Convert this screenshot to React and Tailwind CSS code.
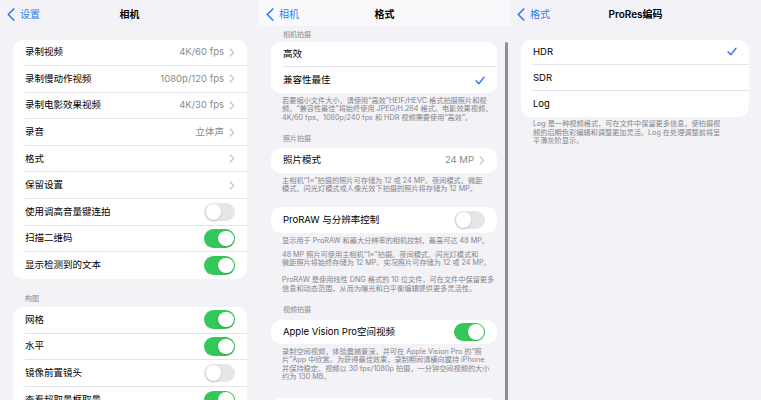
import React from 'react';

const BLUE = 'text-[#2f7cf6]';

const BackChevron = () => (
  <svg width="8" height="13" viewBox="0 0 8 13" className="shrink-0">
    <polyline points="6.8,1 1.3,6.5 6.8,12" fill="none" stroke="#2f7cf6" strokeWidth="1.7" strokeLinecap="round" strokeLinejoin="round" />
  </svg>
);

const Chevron = () => (
  <svg width="6" height="9" viewBox="0 0 6 9" className="ml-[5px] shrink-0">
    <polyline points="1.2,1 4.6,4.5 1.2,8" fill="none" stroke="#c4c4c8" strokeWidth="1.2" strokeLinecap="round" strokeLinejoin="round" />
  </svg>
);

const Check = () => (
  <svg width="10" height="9" viewBox="0 0 10 9" className="shrink-0">
    <polyline points="1,4.8 3.8,7.8 9,1.2" fill="none" stroke="#2f7cf6" strokeWidth="1.4" strokeLinecap="round" strokeLinejoin="round" />
  </svg>
);

const Toggle = ({ on }) => (
  <div className={`w-[31px] h-[18.5px] rounded-full p-[1.5px] flex shrink-0 ${on ? 'bg-[#34c759] justify-end' : 'bg-[#e6e6e9] justify-start'}`}>
    <div className="w-[15.5px] h-[15.5px] rounded-full bg-white shadow-[0_1px_2px_rgba(0,0,0,0.18)]" />
  </div>
);

const Row = ({ label, value, chevron, toggle, check, last, h }) => (
  <div className="pl-3">
    <div className={`flex items-center pr-3 ${h} ${last ? '' : 'border-b border-[#e4e4e7]'}`}>
      <span className="flex-1 text-[9.5px] text-black whitespace-nowrap">{label}</span>
      {value && <span className="text-[9.5px] text-[#8a8a8e] whitespace-nowrap">{value}</span>}
      {chevron && <Chevron />}
      {toggle !== undefined && <Toggle on={toggle} />}
      {check && <Check />}
    </div>
  </div>
);

const Section = ({ children, className }) => (
  <div className={`px-3 text-[7px] leading-[9px] text-[#8a8a8e] ${className}`}>{children}</div>
);

const Footer = ({ lines, className }) => (
  <div className={`px-[11px] text-[7.2px] leading-[8.4px] text-[#85858a] ${className}`}>
    {lines.map((l, i) => (
      <div key={i} className="whitespace-nowrap">{l}</div>
    ))}
  </div>
);

const Nav = ({ back, title, className }) => (
  <div className={`relative flex items-center ${className}`}>
    <div className="absolute left-[7px] flex items-center gap-[5px]">
      <BackChevron />
      <span className={`text-[10px] ${BLUE}`}>{back}</span>
    </div>
    <div className="flex-1 text-center text-[10px] font-semibold text-black">{title}</div>
  </div>
);

const card = 'bg-white rounded-[10px] overflow-hidden';

export default function App() {
  return (
    <div
      className="w-[761px] h-[400px] overflow-hidden bg-[#f2f2f7] flex"
      style={{ fontFamily: 'Inter, "Noto Sans CJK SC", sans-serif' }}
    >
      {/* 相机 */}
      <div className="w-[259px] shrink-0">
        <Nav back="设置" title="相机" className="h-[28px]" />
        <div className={`${card} mt-[11.5px] ml-[13px] mr-[12px]`}>
          <Row h="h-[26.6px]" label="录制视频" value="4K/60 fps" chevron />
          <Row h="h-[26.6px]" label="录制慢动作视频" value="1080p/120 fps" chevron />
          <Row h="h-[26.6px]" label="录制电影效果视频" value="4K/30 fps" chevron />
          <Row h="h-[26.6px]" label="录音" value="立体声" chevron />
          <Row h="h-[26.6px]" label="格式" chevron />
          <Row h="h-[26.6px]" label="保留设置" chevron />
          <Row h="h-[26.6px]" label="使用调高音量键连拍" toggle={false} />
          <Row h="h-[26.6px]" label="扫描二维码" toggle={true} />
          <Row h="h-[26.6px]" label="显示检测到的文本" toggle={true} last />
        </div>
        <Section className="ml-[13px] pt-[15.5px] pb-[3.6px]">构图</Section>
        <div className={`${card} ml-[13px] mr-[12px]`}>
          <Row h="h-[26.6px]" label="网格" toggle={true} />
          <Row h="h-[26.6px]" label="水平" toggle={true} />
          <Row h="h-[26.6px]" label="镜像前置镜头" toggle={false} />
          <Row h="h-[26.6px]" label="查看超取景框取景" toggle={true} last />
        </div>
      </div>

      {/* 格式 */}
      <div className="w-[251px] shrink-0 relative">
        <Nav back="相机" title="格式" className="h-[26px] pt-[2px] bg-[#f9f9fb]" />
        <div className="ml-[12px] mr-[13px]">
          <Section className="pt-[3.5px] pb-[3.5px]">相机拍摄</Section>
          <div className={card}>
            <Row h="h-[25.4px]" label="高效" />
            <Row h="h-[25.4px]" label="兼容性最佳" check last />
          </div>
          <Footer
            className="pt-[4px]"
            lines={[
              '若要缩小文件大小，请使用“高效”HEIF/HEVC 格式拍摄照片和视',
              '频。“兼容性最佳”将始终使用 JPEG/H.264 格式。电影效果视频、',
              '4K/60 fps、1080p/240 fps 和 HDR 视频需要使用“高效”。',
            ]}
          />
          <Section className="pt-[11.6px] pb-[5.5px]">照片拍摄</Section>
          <div className={card}>
            <Row h="h-[25px]" label="照片模式" value="24 MP" chevron last />
          </div>
          <Footer
            className="pt-[3.8px] pb-[13.4px]"
            lines={[
              '主相机“1×”拍摄的照片可存储为 12 或 24 MP。夜间模式、微距',
              '模式、闪光灯模式或人像光效下拍摄的照片将存储为 12 MP。',
            ]}
          />
          <div className={card}>
            <Row h="h-[26px]" label="ProRAW 与分辨率控制" toggle={false} last />
          </div>
          <Footer className="pt-[3.8px]" lines={['显示用于 ProRAW 和最大分辨率的相机控制，最高可达 48 MP。']} />
          <Footer
            className="pt-[5.6px]"
            lines={[
              '48 MP 照片可使用主相机“1×”拍摄。夜间模式、闪光灯模式和',
              '微距照片将始终存储为 12 MP。实况照片可存储为 12 或 24 MP。',
            ]}
          />
          <Footer
            className="pt-[8.5px]"
            lines={[
              'ProRAW 是使用线性 DNG 格式的 10 位文件，可在文件中保留更多',
              '信息和动态范围，从而为曝光和白平衡编辑提供更多灵活性。',
            ]}
          />
          <Section className="pt-[12.4px] pb-[5.5px]">视频拍摄</Section>
          <div className={card}>
            <Row h="h-[24.5px]" label="Apple Vision Pro空间视频" toggle={true} last />
          </div>
          <Footer
            className="pt-[3.3px] pb-[16.6px]"
            lines={[
              '录制空间视频，体验震撼景深，并可在 Apple Vision Pro 的“照',
              '片”App 中欣赏。为获得最佳效果，录制期间请横向握持 iPhone',
              '并保持稳定。视频以 30 fps/1080p 拍摄，一分钟空间视频的大小',
              '约为 130 MB。',
            ]}
          />
          <div className={card}>
            <Row h="h-[26px]" label="" toggle={true} last />
          </div>
        </div>
        {/* scroll indicator */}
        <div className="absolute left-[246px] top-[42px] w-[2.5px] h-[370px] rounded-full bg-[#8e8e93]" />
      </div>

      {/* ProRes编码 */}
      <div className="flex-1">
        <Nav back="格式" title="ProRes编码" className="h-[28px]" />
        <div className={`${card} mt-[11.5px] ml-[11px] mr-[12px]`}>
          <Row h="h-[25.8px]" label="HDR" check />
          <Row h="h-[25.8px]" label="SDR" />
          <Row h="h-[25.8px]" label="Log" last />
        </div>
        <Footer
          className="ml-[12px] pt-[3.4px] leading-[8.6px]"
          lines={[
            'Log 是一种视频格式，可在文件中保留更多信息，使拍摄视',
            '频的后期色彩编辑和调整更加灵活。Log 在处理调整前将呈',
            '平滑灰阶显示。',
          ]}
        />
      </div>
    </div>
  );
}
